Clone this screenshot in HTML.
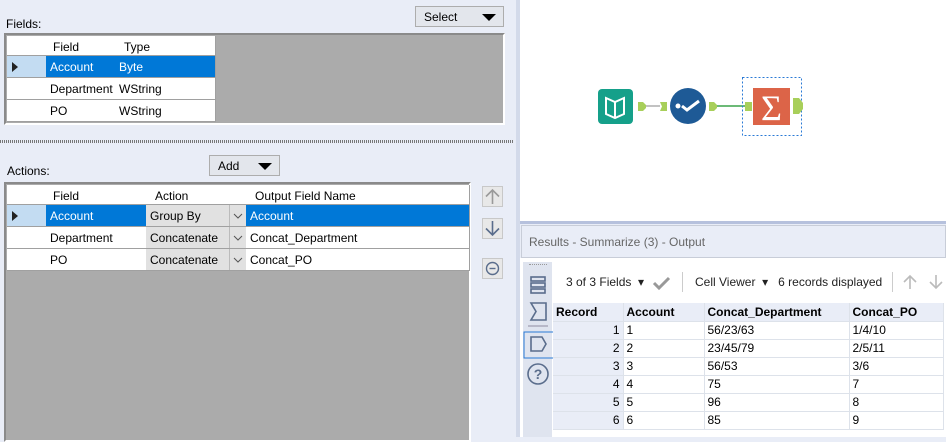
<!DOCTYPE html>
<html><head><meta charset="utf-8"><style>
*{box-sizing:border-box;margin:0;padding:0}
body{width:946px;height:437px;overflow:hidden;background:#e9edf7;font-family:"Liberation Sans",sans-serif;font-size:12px;color:#000;position:relative}
.a{position:absolute}
.dd{background:#e3e6ec;border:1px solid #adadad;font-size:12px;padding:3px 0 0 8px}
.tri{position:absolute;right:7px;top:7px;width:0;height:0;border-left:7px solid transparent;border-right:7px solid transparent;border-top:7px solid #000}
.grid{background:#ababab;border:2px solid #8a8a8a;border-right-color:#fff;border-bottom-color:#fff}
.c{position:absolute;background:#fff;border-right:1px solid #a0a0a0;border-bottom:1px solid #a0a0a0;padding:4px 0 0 4px;white-space:nowrap;overflow:hidden}
.h{padding-left:9px}
.sel{background:#0078d7;color:#fff}
.rh{background:#fff}
.rhs{background:#c3dcf2}
.arr{position:absolute;left:5px;top:6px;border-top:5px solid transparent;border-bottom:5px solid transparent;border-left:6px solid #222}
.cb{background:#e1e1e1}
.cbd{position:absolute;right:0;top:0;width:17px;height:100%;border-left:1px solid #bbb;background:#e1e1e1}
.btn{position:absolute;width:21px;height:21px;border:1px solid #c8c8c8;background:#e8e8e8}
.t td{border-right:1px solid #dde2ea;border-bottom:1px solid #dde2ea;height:18px;padding:0 3px;font-size:12px}
</style></head><body>
<div class="a dd" style="left:415px;top:6px;width:89px;height:21px">Select<div class="tri"></div></div>
<div class="a" style="left:6px;top:17px">Fields:</div>
<div class="a grid" style="left:4px;top:33px;width:501px;height:92px"></div>
<div class="c rh" style="left:7px;top:36px;width:40px;height:20px"></div>
<div class="c h" style="left:46px;top:36px;width:70px;height:20px;padding-left:7px">Field</div>
<div class="c h" style="left:115px;top:36px;width:101px;height:20px">Type</div>
<div class="c rhs" style="left:7px;top:56px;width:40px;height:22px;border-right:0"><div class="arr"></div></div>
<div class="c sel" style="left:46px;top:56px;width:70px;height:22px">Account</div>
<div class="c sel" style="left:115px;top:56px;width:101px;height:22px">Byte</div>
<div class="c rh" style="left:7px;top:78px;width:40px;height:22px"></div>
<div class="c" style="left:46px;top:78px;width:70px;height:22px">Department</div>
<div class="c" style="left:115px;top:78px;width:101px;height:22px">WString</div>
<div class="c rh" style="left:7px;top:100px;width:40px;height:22px"></div>
<div class="c" style="left:46px;top:100px;width:70px;height:22px">PO</div>
<div class="c" style="left:115px;top:100px;width:101px;height:22px">WString</div>

<div class="a" style="left:0;top:140px;width:513px;height:3px;background:repeating-linear-gradient(90deg,#777 0 1px,#e9edf7 1px 2px)"></div>

<div class="a dd" style="left:209px;top:155px;width:71px;height:21px">Add<div class="tri"></div></div>
<div class="a" style="left:7px;top:164px">Actions:</div>
<div class="a grid" style="left:4px;top:182px;width:467px;height:260px"></div>
<div class="c rh" style="left:7px;top:185px;width:40px;height:20px"></div>
<div class="c h" style="left:46px;top:185px;width:101px;height:20px;padding-left:7px">Field</div>
<div class="c h" style="left:146px;top:185px;width:101px;height:20px">Action</div>
<div class="c h" style="left:246px;top:185px;width:224px;height:20px">Output Field Name</div>
<div class="c rhs" style="left:7px;top:205px;width:40px;height:22px;border-right:0"><div class="arr"></div></div>
<div class="c sel" style="left:46px;top:205px;width:101px;height:22px">Account</div>
<div class="c cb" style="left:146px;top:205px;width:101px;height:22px">Group By<div class="cbd"><svg width="16" height="20"><path d="M4 9l4 4 4-4" fill="none" stroke="#555"/></svg></div></div>
<div class="c sel" style="left:246px;top:205px;width:224px;height:22px">Account</div>
<div class="c rh" style="left:7px;top:227px;width:40px;height:22px"></div>
<div class="c" style="left:46px;top:227px;width:101px;height:22px">Department</div>
<div class="c cb" style="left:146px;top:227px;width:101px;height:22px">Concatenate<div class="cbd"><svg width="16" height="20"><path d="M4 9l4 4 4-4" fill="none" stroke="#555"/></svg></div></div>
<div class="c" style="left:246px;top:227px;width:224px;height:22px">Concat_Department</div>
<div class="c rh" style="left:7px;top:249px;width:40px;height:22px"></div>
<div class="c" style="left:46px;top:249px;width:101px;height:22px">PO</div>
<div class="c cb" style="left:146px;top:249px;width:101px;height:22px">Concatenate<div class="cbd"><svg width="16" height="20"><path d="M4 9l4 4 4-4" fill="none" stroke="#555"/></svg></div></div>
<div class="c" style="left:246px;top:249px;width:224px;height:22px">Concat_PO</div>

<div class="btn" style="left:482px;top:186px"><svg width="19" height="19"><path d="M9.5 3v14M3 9.5l6.5-6.5 6.5 6.5" fill="none" stroke="#9a9a9a" stroke-width="1.6"/></svg></div>
<div class="btn" style="left:482px;top:218px"><svg width="19" height="19"><path d="M9.5 2v14M3 9.5l6.5 6.5 6.5-6.5" fill="none" stroke="#5a6d8c" stroke-width="1.6"/></svg></div>
<div class="btn" style="left:482px;top:258px"><svg width="19" height="19"><circle cx="9.5" cy="9.5" r="6" fill="none" stroke="#5a6d8c" stroke-width="1.4"/><path d="M6.5 9.5h6" stroke="#5a6d8c" stroke-width="1.4"/></svg></div>

<div class="a" style="left:514px;top:0;width:6px;height:437px;background:#d3daea;border-left:2px solid #e9edf7"></div>
<div class="a" style="left:520px;top:0;width:426px;height:222px;background:#fff"></div>
<svg class="a" style="left:580px;top:70px" width="230" height="80">
<rect x="18" y="19" width="35" height="35" rx="4" fill="#15a08a"/>
<path d="M26 28v16l9 4 9-4V28l-9 4z" fill="none" stroke="#fff" stroke-width="2"/><path d="M35 32v16" stroke="#fff" stroke-width="2"/>
<path d="M58 32h5l3 3v3l-3 3h-5z" fill="#a8cf5a"/><path d="M66 36h14" stroke="#999" stroke-width="1.2"/>
<path d="M80 32h7v9h-7l2-4.5z" fill="#a8cf5a"/>
<circle cx="108" cy="36" r="18" fill="#1e5a96"/><circle cx="98" cy="36" r="2.5" fill="#fff"/><path d="M102 36l5 4 12-9" fill="none" stroke="#fff" stroke-width="3"/>
<path d="M129 32h5l3 3v3l-3 3h-5z" fill="#a8cf5a"/><path d="M137 36h28" stroke="#3ba34a" stroke-width="1.5"/>
<path d="M165 32h7v9h-7z" fill="#a8cf5a"/>
<rect x="162.5" y="7.5" width="59" height="58" fill="none" stroke="#2a7ad6" stroke-dasharray="2 2"/>
<rect x="173" y="18" width="37" height="37" fill="#dc6448"/>
<text x="191.5" y="50" text-anchor="middle" font-family="Liberation Serif,serif" font-size="36" fill="#fff">Σ</text>
<path d="M213 28h6l4 5v6l-4 5h-6z" fill="#a8cf5a"/>
</svg>

<div class="a" style="left:520px;top:221px;width:426px;height:3px;background:#b6c1dd"></div>
<div class="a" style="left:521px;top:225px;width:425px;height:33px;background:#e9edf7;border:1px solid #c8cdd8;color:#666;padding:9px 0 0 7px;font-size:12px">Results - Summarize (3) - Output</div>
<div class="a" style="left:520px;top:258px;width:426px;height:179px;background:#fff"></div>
<div class="a" style="left:523px;top:262px;width:29px;height:175px;background:#dfe4ef"></div>
<div class="a" style="left:529px;top:264px;width:18px;border-top:1px dotted #999"></div>
<svg class="a" style="left:523px;top:270px" width="30" height="120">
<g fill="none" stroke="#5a6d8c" stroke-width="1.6"><rect x="8" y="7" width="14" height="4"/><rect x="8" y="13" width="14" height="4"/><rect x="8" y="19" width="14" height="4"/>
<path d="M8 33h15v17H8l5-8.5z"/><path d="M5 56h20" stroke="#aab"/><rect x="1" y="62" width="30" height="26" stroke="#2a7ad6" stroke-width="1"/>
<path d="M8 67h11l4 7-4 7H8z"/><circle cx="15" cy="104" r="10"/></g>
<text x="15" y="109" text-anchor="middle" font-size="14" font-weight="bold" fill="#5a6d8c" font-family="Liberation Sans">?</text></svg>
<div class="a" style="left:566px;top:275px;font-size:12px;color:#222">3 of 3 Fields &nbsp;▾</div>
<svg class="a" style="left:652px;top:275px" width="20" height="16"><path d="M2 8l5 5 10-10" fill="none" stroke="#999" stroke-width="3"/></svg>
<div class="a" style="left:682px;top:272px;width:1px;height:20px;background:#ccc"></div>
<div class="a" style="left:695px;top:275px;color:#222">Cell Viewer &nbsp;▾ &nbsp;&nbsp;6 records displayed</div>
<div class="a" style="left:892px;top:272px;width:1px;height:20px;background:#ccc"></div>
<svg class="a" style="left:900px;top:273px" width="46" height="18"><path d="M10 16V3M4 9l6-6 6 6M36 2v13M30 9l6 6 6-6" fill="none" stroke="#bbb" stroke-width="1.6"/></svg>
<table class="a t" style="left:553px;top:303px;border-collapse:collapse;width:391px">
<tr style="background:#e9edf7;font-weight:bold"><td style="width:70px">Record</td><td style="width:81px">Account</td><td style="width:145px">Concat_Department</td><td>Concat_PO</td></tr>
<tr><td style="text-align:right;background:#e9edf7">1</td><td>1</td><td>56/23/63</td><td>1/4/10</td></tr>
<tr><td style="text-align:right;background:#e9edf7">2</td><td>2</td><td>23/45/79</td><td>2/5/11</td></tr>
<tr><td style="text-align:right;background:#e9edf7">3</td><td>3</td><td>56/53</td><td>3/6</td></tr>
<tr><td style="text-align:right;background:#e9edf7">4</td><td>4</td><td>75</td><td>7</td></tr>
<tr><td style="text-align:right;background:#e9edf7">5</td><td>5</td><td>96</td><td>8</td></tr>
<tr><td style="text-align:right;background:#e9edf7">6</td><td>6</td><td>85</td><td>9</td></tr>
</table>
</body></html>
